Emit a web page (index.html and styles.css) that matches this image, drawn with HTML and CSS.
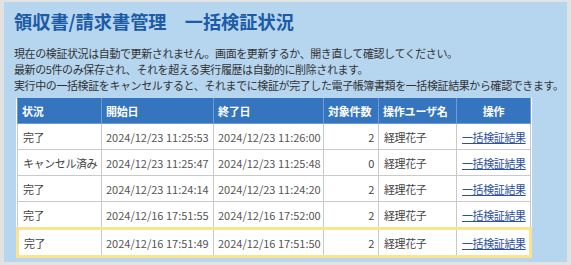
FILE: index.html
```html
<!DOCTYPE html>
<html lang="ja">
<head>
    <meta charset="UTF-8">
    <meta name="viewport" content="width=device-width, initial-scale=1.0">
    <title>一括検証状況</title>
    <link rel="stylesheet" href="styles.css">
</head>
<body>

    <div class="panel">
        <h1>領収書/請求書管理　一括検証状況</h1>

        <p class="notice">
            現在の検証状況は自動で更新されません。画面を更新するか、開き直して確認してください。<br>
            最新の5件のみ保存され、それを超える実行履歴は自動的に削除されます。<br>
            実行中の一括検証をキャンセルすると、それまでに検証が完了した電子帳簿書類を一括検証結果から確認できます。
        </p>

        <table class="status-table">
            <colgroup>
                <col class="col-status">
                <col class="col-date">
                <col class="col-date2">
                <col class="col-count">
                <col class="col-user">
                <col class="col-op">
            </colgroup>
            <thead>
                <tr>
                    <th>状況</th>
                    <th>開始日</th>
                    <th>終了日</th>
                    <th>対象件数</th>
                    <th>操作ユーザ名</th>
                    <th class="center">操作</th>
                </tr>
            </thead>
            <tbody>
                <tr>
                    <td>完了</td>
                    <td class="date">2024/12/23 11:25:53</td>
                    <td class="date">2024/12/23 11:26:00</td>
                    <td class="num">2</td>
                    <td>経理花子</td>
                    <td><a href="#">一括検証結果</a></td>
                </tr>
                <tr>
                    <td>キャンセル済み</td>
                    <td class="date">2024/12/23 11:25:47</td>
                    <td class="date">2024/12/23 11:25:48</td>
                    <td class="num">0</td>
                    <td>経理花子</td>
                    <td><a href="#">一括検証結果</a></td>
                </tr>
                <tr>
                    <td>完了</td>
                    <td class="date">2024/12/23 11:24:14</td>
                    <td class="date">2024/12/23 11:24:20</td>
                    <td class="num">2</td>
                    <td>経理花子</td>
                    <td><a href="#">一括検証結果</a></td>
                </tr>
                <tr>
                    <td>完了</td>
                    <td class="date">2024/12/16 17:51:55</td>
                    <td class="date">2024/12/16 17:52:00</td>
                    <td class="num">2</td>
                    <td>経理花子</td>
                    <td><a href="#">一括検証結果</a></td>
                </tr>
                <tr class="selected">
                    <td>完了</td>
                    <td class="date">2024/12/16 17:51:49</td>
                    <td class="date">2024/12/16 17:51:50</td>
                    <td class="num">2</td>
                    <td>経理花子</td>
                    <td><a href="#">一括検証結果</a></td>
                </tr>
            </tbody>
        </table>
    </div>

</body>
</html>
```

FILE: styles.css
```css
body {
    background-color: #e2e2e2;
    margin: 0;
    padding: 2px 4px 3px 4px;
    font-family: 'Noto Sans CJK JP', sans-serif;
    color: #333333;
}

.panel {
    background-color: #b6d6f0;
    height: 260px;
    padding: 6px 10px 0 10px;
    box-sizing: border-box;
}

h1 {
    margin: 0;
    font-size: 18.2px;
    line-height: 26px;
    color: #1d5ba6;
}

.notice {
    margin: 11px 0 5px 0;
    font-size: 11px;
    line-height: 16px;
    letter-spacing: -0.4px;
    white-space: nowrap;
}

.status-table {
    border-collapse: collapse;
    background-color: #ffffff;
    font-size: 11px;
    table-layout: fixed;
    width: 513px;
    margin-left: 2px;
}

.col-status { width: 84px; }
.col-date { width: 112px; }
.col-date2 { width: 110px; }
.col-count { width: 55px; }
.col-user { width: 78px; }
.col-op { width: 74px; }

.status-table th {
    background-color: #3574be;
    color: #ffffff;
    font-weight: bold;
    text-align: left;
    height: 24px;
    padding: 0 4px;
    border: 1px solid #6f9dd2;
    border-top-color: #3574be;
    white-space: nowrap;
    letter-spacing: -0.2px;
}

.status-table th.center {
    text-align: center;
}

.status-table td {
    height: 25px;
    padding: 0 4px 0 5px;
    border: 1px solid #c9c9c9;
    color: #444444;
    white-space: nowrap;
    letter-spacing: -0.4px;
}

.status-table td.date {
    padding-left: 4px;
    letter-spacing: 0;
    color: #555555;
}

.status-table td.num {
    text-align: right;
}

.status-table a {
    color: #2c4fa3; /* リンク色 */
}

.status-table tr.selected td {
    border-top: 3px solid #fce48e;
    border-bottom: 3px solid #fce48e;
}

.status-table tr.selected td:first-child {
    border-left: 3px solid #fce48e;
}

.status-table tr.selected td:last-child {
    border-right: 3px solid #fce48e;
}
```
